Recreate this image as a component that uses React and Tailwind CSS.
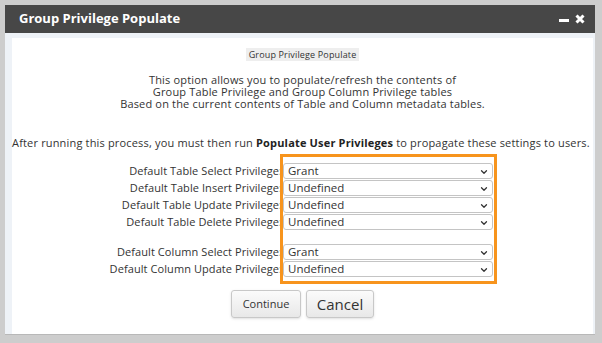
import { ChevronDown } from "lucide-react"

const tableRows = [
  { label: "Default Table Select Privilege:", value: "Grant" },
  { label: "Default Table Insert Privilege:", value: "Undefined" },
  { label: "Default Table Update Privilege:", value: "Undefined" },
  { label: "Default Table Delete Privilege:", value: "Undefined" },
]

const columnRows = [
  { label: "Default Column Select Privilege:", value: "Grant" },
  { label: "Default Column Update Privilege:", value: "Undefined" },
]

const PrivRow = ({ label, value }) => (
  <div className="flex items-center h-[17px]">
    <div className="w-[271px] text-right pr-[1px] text-[11px] tracking-[0.08px] text-[#333] leading-none">{label}</div>
    <div className="relative w-[210px] h-[16px] border border-[#c4c4c4] rounded-[3px] bg-white flex items-center pl-[4px]">
      <span className="text-[11.5px] text-[#333] leading-none">{value}</span>
      <ChevronDown className="absolute right-[3px] top-[3px] h-[10px] w-[10px] text-[#333]" strokeWidth={3} />
    </div>
  </div>
)

export default function App() {
  return (
    <div
      className="w-[602px] h-[343px] bg-[#cdcdcd] pl-[5px] pr-[7px] pt-[5px] overflow-hidden"
      style={{ fontFamily: "'Open Sans', 'DejaVu Sans', sans-serif" }}
    >
      {/* Title bar */}
      <div className="h-[28px] bg-[#474747] flex items-center justify-between pl-[14px] pr-[10px]">
        <span className="text-white font-bold text-[13px]">Group Privilege Populate</span>
        <div className="flex items-center gap-[6px]">
          <span className="block w-[10px] h-[3px] bg-white mt-[3px]"></span>
          <svg width="10" height="10" viewBox="0 0 10 10">
            <path d="M1.5 1.5 L8.5 8.5 M8.5 1.5 L1.5 8.5" stroke="white" strokeWidth="3" />
          </svg>
        </div>
      </div>

      {/* Body */}
      <div className="h-[302px] bg-[#eef2f7] pl-[7px] pr-[2px] pt-[5px] border-b border-[#b8b8b8]">
        <div className="relative h-full bg-white flex flex-col items-center">
          <div className="mt-[10px] bg-[#eeeeee] px-[3px] h-[13px] flex items-center text-[9px] tracking-[0.15px] text-[#333]">
            Group Privilege Populate
          </div>

          <div className="mt-[13px] text-center text-[11px] tracking-[0.17px] leading-[12px] text-[#333]">
            <p>This option allows you to populate/refresh the contents of</p>
            <p>Group Table Privilege and Group Column Privilege tables</p>
            <p>Based on the current contents of Table and Column metadata tables.</p>
          </div>

          <p className="mt-[27px] self-start text-[11px] tracking-[0.17px] leading-[12px] text-[#333]">
            After running this process, you must then run <b className="text-[#222]">Populate User Privileges</b> to propagate these settings to users.
          </p>

          <div className="self-start mt-[13px]">
            {tableRows.map((r) => (
              <PrivRow key={r.label} {...r} />
            ))}
            <div className="h-[13px]"></div>
            {columnRows.map((r) => (
              <PrivRow key={r.label} {...r} />
            ))}
          </div>

          <div className="mt-[13px] flex gap-[5px]">
            <button className="w-[70px] h-[28px] rounded-[3px] border border-[#c8c8c8] bg-gradient-to-b from-[#fbfbfb] to-[#e8e8e8] text-[11px] text-[#333] shadow-sm">
              Continue
            </button>
            <button className="w-[68px] h-[28px] rounded-[3px] border border-[#c8c8c8] bg-gradient-to-b from-[#fbfbfb] to-[#e8e8e8] text-[15px] text-[#333] shadow-sm">
              Cancel
            </button>
          </div>

          {/* Annotation highlight */}
          <div className="absolute left-[268px] top-[116px] w-[217px] h-[130px] border-[3px] border-[#f7941d] pointer-events-none"></div>
        </div>
      </div>
    </div>
  )
}
